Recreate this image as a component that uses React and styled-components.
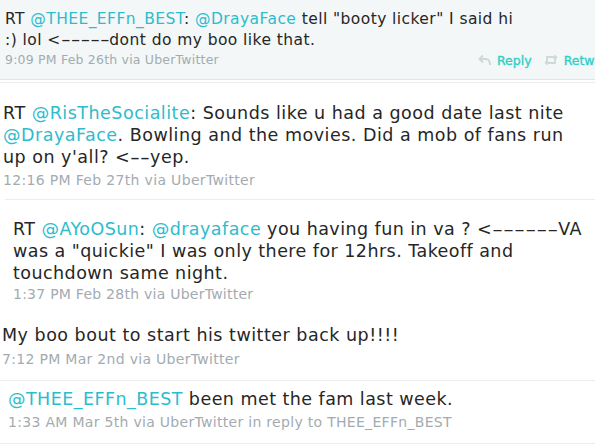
import React from "react";
import styled, { createGlobalStyle } from "styled-components";

const Global = createGlobalStyle`
  html, body { margin: 0; padding: 0; background: #ffffff; }
  body { width: 595px; height: 447px; overflow: hidden; }
`;

const Feed = styled.div`
  width: 595px;
  height: 447px;
  overflow: hidden;
  display: flex;
  flex-direction: column;
  font-family: "DejaVu Sans", "Liberation Sans", sans-serif;
  color: #262626;
`;

const Tweet = styled.div`
  background: ${(p) => p.$bg || "#ffffff"};
  padding: ${(p) => p.$pad};
  margin: ${(p) => p.$margin || "0"};
  border-top: ${(p) => (p.$top ? `1px solid ${p.$top}` : "none")};
  border-bottom: ${(p) => (p.$bottom ? `1px solid ${p.$bottom}` : "none")};
  box-sizing: border-box;
  overflow: hidden;
`;

const Body = styled.div`
  font-size: ${(p) => p.$size}px;
  line-height: ${(p) => p.$lh}px;
  letter-spacing: ${(p) => p.$ls || 0}px;
  white-space: nowrap;
`;

const Link = styled.span`
  color: #2dbccd;
`;

const Dashes = styled.span`
  display: inline-block;
  letter-spacing: 0;
  transform: scaleX(${(p) => p.$k});
  transform-origin: 0 50%;
  margin-right: ${(p) => ((p.$k - 1) * p.$n * 0.361).toFixed(3)}em;
`;

const MetaRow = styled.div`
  display: flex;
  align-items: center;
  justify-content: space-between;
  margin-top: ${(p) => p.$mt}px;
  height: 18px;
  white-space: nowrap;
`;

const Meta = styled.span`
  font-size: ${(p) => p.$size}px;
  line-height: 18px;
  color: #a3abb1;
  letter-spacing: ${(p) => p.$ls || 0}px;
`;

const Actions = styled.div`
  flex: none;
  width: 117px;
  display: flex;
  align-items: center;
  gap: 12px;
`;

const Action = styled.span`
  flex: none;
  display: flex;
  align-items: center;
  gap: 6px;
  font-size: 12.5px;
  color: #2fcfc6;
  -webkit-text-stroke: 0.35px #2fcfc6;
`;

const ReplyIcon = () => (
  <svg width="13" height="12" viewBox="0 0 13 12">
    <path d="M5 1.5 L1.5 5 L5 8.5 M1.5 5 H7.5 C10.5 5 12 7 12 11" fill="none" stroke="#cfd8d8" strokeWidth="2" />
  </svg>
);

const RetweetIcon = () => (
  <svg width="14" height="12" viewBox="0 0 14 12">
    <path d="M3 10 V3 H9 M1 8 L3 10 L5 8" fill="none" stroke="#cfd8d8" strokeWidth="1.8" />
    <path d="M11 2 V9 H5 M9 4 L11 2 L13 4" fill="none" stroke="#cfd8d8" strokeWidth="1.8" />
  </svg>
);

export default function App() {
  return (
    <>
      <Global />
      <Feed>
        <Tweet $bg="#f3f7f7" $pad="9px 0 10px 5px" $bottom="#dfe5e5">
          <Body $size={15.5} $lh={21} $ls={0.43}>
            RT <Link>@THEE_EFFn_BEST</Link>: <Link>@DrayaFace</Link> tell "booty licker" I said hi
            <br />
            :) lol &lt;<Dashes $k={1.74} $n={5}>-----</Dashes>dont do my boo like that.
          </Body>
          <MetaRow $mt={0}>
            <Meta $size={12.5} $ls={0.2}>9:09 PM Feb 26th via UberTwitter</Meta>
            <Actions>
              <Action>
                <ReplyIcon />
                Reply
              </Action>
              <Action>
                <RetweetIcon />
                Retweet
              </Action>
            </Actions>
          </MetaRow>
        </Tweet>

        <Tweet $pad="19px 0 10px 3px" $margin="2px 0 0 0" $top="#e9eded">
          <Body $size={17.5} $lh={22} $ls={0.5}>
            RT <Link>@RisTheSocialite</Link>: Sounds like u had a good date last nite
            <br />
            <Link>@DrayaFace</Link>. Bowling and the movies. Did a mob of fans run
            <br />
            up on y'all? &lt;<Dashes $k={1.57} $n={2}>--</Dashes>yep.
          </Body>
          <MetaRow $mt={3}>
            <Meta $size={14} $ls={0.33}>12:16 PM Feb 27th via UberTwitter</Meta>
          </MetaRow>
        </Tweet>

        <Tweet $pad="18px 0 0 8px" $margin="0 0 0 5px" $top="#e9eded">
          <Body $size={17.5} $lh={22} $ls={0.45}>
            RT <Link>@AYoOSun</Link>: <Link>@drayaface</Link> you having fun in va ? &lt;<Dashes $k={1.75} $n={6}>------</Dashes>VA
            <br />
            was a "quickie" I was only there for 12hrs. Takeoff and
            <br />
            touchdown same night.
          </Body>
          <MetaRow $mt={1}>
            <Meta $size={14} $ls={0.25}>1:37 PM Feb 28th via UberTwitter</Meta>
          </MetaRow>
        </Tweet>

        <Tweet $pad="21px 0 12px 2px">
          <Body $size={17.5} $lh={22} $ls={0.5}>My boo bout to start his twitter back up!!!!</Body>
          <MetaRow $mt={4}>
            <Meta $size={14} $ls={0.3}>7:12 PM Mar 2nd via UberTwitter</Meta>
          </MetaRow>
        </Tweet>

        <Tweet $pad="7px 0 12px 8px" $top="#e9eded" $bottom="#e9eded">
          <Body $size={17.5} $lh={22} $ls={0.45}>
            <Link>@THEE_EFFn_BEST</Link> been met the fam last week.
          </Body>
          <MetaRow $mt={3}>
            <Meta $size={14} $ls={0.3}>1:33 AM Mar 5th via UberTwitter in reply to THEE_EFFn_BEST</Meta>
          </MetaRow>
        </Tweet>
      </Feed>
    </>
  );
}
